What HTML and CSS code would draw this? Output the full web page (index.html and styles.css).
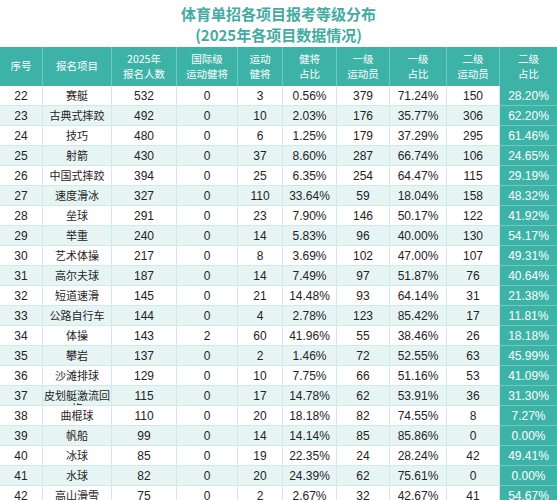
FILE: index.html
```html
<!DOCTYPE html>
<html lang="zh-CN">
<head>
    <meta charset="UTF-8">
    <meta name="viewport" content="width=device-width, initial-scale=1.0">
    <title>体育单招各项目报考等级分布</title>
    <link rel="stylesheet" href="styles.css">
</head>
<body>
    <div class="page">
        <div class="title-block">
            <h1 class="title">体育单招各项目报考等级分布</h1>
            <h2 class="subtitle">(2025年各项目数据情况)</h2>
        </div>
        <table class="data-table">
            <colgroup>
                <col class="col-no">
                <col class="col-name">
                <col class="col-total">
                <col class="col-intl">
                <col class="col-master">
                <col class="col-master-pct">
                <col class="col-first">
                <col class="col-first-pct">
                <col class="col-second">
                <col class="col-second-pct">
            </colgroup>
            <thead>
                <tr>
                    <th>序号</th>
                    <th>报名项目</th>
                    <th>2025年<br>报名人数</th>
                    <th>国际级<br>运动健将</th>
                    <th>运动<br>健将</th>
                    <th>健将<br>占比</th>
                    <th>一级<br>运动员</th>
                    <th>一级<br>占比</th>
                    <th>二级<br>运动员</th>
                    <th class="highlight">二级<br>占比</th>
                </tr>
            </thead>
            <tbody>
                <tr><td>22</td><td><div class="cell">赛艇</div></td><td>532</td><td>0</td><td>3</td><td>0.56%</td><td>379</td><td>71.24%</td><td>150</td><td class="highlight">28.20%</td></tr>
                <tr><td>23</td><td><div class="cell">古典式摔跤</div></td><td>492</td><td>0</td><td>10</td><td>2.03%</td><td>176</td><td>35.77%</td><td>306</td><td class="highlight">62.20%</td></tr>
                <tr><td>24</td><td><div class="cell">技巧</div></td><td>480</td><td>0</td><td>6</td><td>1.25%</td><td>179</td><td>37.29%</td><td>295</td><td class="highlight">61.46%</td></tr>
                <tr><td>25</td><td><div class="cell">射箭</div></td><td>430</td><td>0</td><td>37</td><td>8.60%</td><td>287</td><td>66.74%</td><td>106</td><td class="highlight">24.65%</td></tr>
                <tr><td>26</td><td><div class="cell">中国式摔跤</div></td><td>394</td><td>0</td><td>25</td><td>6.35%</td><td>254</td><td>64.47%</td><td>115</td><td class="highlight">29.19%</td></tr>
                <tr><td>27</td><td><div class="cell">速度滑冰</div></td><td>327</td><td>0</td><td>110</td><td>33.64%</td><td>59</td><td>18.04%</td><td>158</td><td class="highlight">48.32%</td></tr>
                <tr><td>28</td><td><div class="cell">垒球</div></td><td>291</td><td>0</td><td>23</td><td>7.90%</td><td>146</td><td>50.17%</td><td>122</td><td class="highlight">41.92%</td></tr>
                <tr><td>29</td><td><div class="cell">举重</div></td><td>240</td><td>0</td><td>14</td><td>5.83%</td><td>96</td><td>40.00%</td><td>130</td><td class="highlight">54.17%</td></tr>
                <tr><td>30</td><td><div class="cell">艺术体操</div></td><td>217</td><td>0</td><td>8</td><td>3.69%</td><td>102</td><td>47.00%</td><td>107</td><td class="highlight">49.31%</td></tr>
                <tr><td>31</td><td><div class="cell">高尔夫球</div></td><td>187</td><td>0</td><td>14</td><td>7.49%</td><td>97</td><td>51.87%</td><td>76</td><td class="highlight">40.64%</td></tr>
                <tr><td>32</td><td><div class="cell">短道速滑</div></td><td>145</td><td>0</td><td>21</td><td>14.48%</td><td>93</td><td>64.14%</td><td>31</td><td class="highlight">21.38%</td></tr>
                <tr><td>33</td><td><div class="cell">公路自行车</div></td><td>144</td><td>0</td><td>4</td><td>2.78%</td><td>123</td><td>85.42%</td><td>17</td><td class="highlight">11.81%</td></tr>
                <tr><td>34</td><td><div class="cell">体操</div></td><td>143</td><td>2</td><td>60</td><td>41.96%</td><td>55</td><td>38.46%</td><td>26</td><td class="highlight">18.18%</td></tr>
                <tr><td>35</td><td><div class="cell">攀岩</div></td><td>137</td><td>0</td><td>2</td><td>1.46%</td><td>72</td><td>52.55%</td><td>63</td><td class="highlight">45.99%</td></tr>
                <tr><td>36</td><td><div class="cell">沙滩排球</div></td><td>129</td><td>0</td><td>10</td><td>7.75%</td><td>66</td><td>51.16%</td><td>53</td><td class="highlight">41.09%</td></tr>
                <tr><td>37</td><td><div class="cell">皮划艇激流回旋</div></td><td>115</td><td>0</td><td>17</td><td>14.78%</td><td>62</td><td>53.91%</td><td>36</td><td class="highlight">31.30%</td></tr>
                <tr><td>38</td><td><div class="cell">曲棍球</div></td><td>110</td><td>0</td><td>20</td><td>18.18%</td><td>82</td><td>74.55%</td><td>8</td><td class="highlight">7.27%</td></tr>
                <tr><td>39</td><td><div class="cell">帆船</div></td><td>99</td><td>0</td><td>14</td><td>14.14%</td><td>85</td><td>85.86%</td><td>0</td><td class="highlight">0.00%</td></tr>
                <tr><td>40</td><td><div class="cell">冰球</div></td><td>85</td><td>0</td><td>19</td><td>22.35%</td><td>24</td><td>28.24%</td><td>42</td><td class="highlight">49.41%</td></tr>
                <tr><td>41</td><td><div class="cell">水球</div></td><td>82</td><td>0</td><td>20</td><td>24.39%</td><td>62</td><td>75.61%</td><td>0</td><td class="highlight">0.00%</td></tr>
                <tr><td>42</td><td><div class="cell">高山滑雪</div></td><td>75</td><td>0</td><td>2</td><td>2.67%</td><td>32</td><td>42.67%</td><td>41</td><td class="highlight">54.67%</td></tr>
            </tbody>
        </table>
    </div>
</body>
</html>
```

FILE: styles.css
```css
:root {
    --teal: #3db3a8;
    --teal-title: #43aba1;
    --teal-line: #6ecac1;
    --row-alt: #e6f5f4;
    --grid-line: #cfeae7;
    --text-color: #1f2324;
}

* {
    margin: 0;
    padding: 0;
    box-sizing: border-box;
}

body {
    background: #ffffff;
    font-family: "Liberation Sans", "Noto Sans CJK SC", sans-serif;
    color: var(--text-color);
    overflow: hidden;
}

.page {
    width: 557px;
}

.title-block {
    height: 47px;
    padding-top: 3px;
    text-align: center;
    color: var(--teal-title);
}

.title,
.subtitle {
    font-family: "Noto Sans CJK SC", sans-serif;
    font-size: 15px;
    font-weight: 700;
    line-height: 21px;
}

.data-table {
    width: 557px;
    table-layout: fixed;
    border-collapse: separate;
    border-spacing: 0;
}

.col-no { width: 43px; }
.col-name { width: 69px; }
.col-total { width: 65px; }
.col-intl { width: 61px; }
.col-master { width: 45px; }
.col-master-pct { width: 54px; }
.col-first { width: 53px; }
.col-first-pct { width: 57px; }
.col-second { width: 53px; }
.col-second-pct { width: 57px; }

.data-table th {
    height: 39px;
    background: var(--teal);
    color: #ffffff;
    font-family: "Noto Sans CJK SC", sans-serif;
    font-size: 10.5px;
    font-weight: 400;
    line-height: 14.5px;
    border-right: 1px solid var(--teal-line);
    vertical-align: middle;
}

.data-table th:last-child {
    border-right: none;
}

.data-table tbody tr {
    height: 19.9px;
}

.data-table tbody tr:nth-child(even) td {
    background: var(--row-alt);
}

.data-table td {
    padding: 0;
    padding-top: 1px;
    text-align: center;
    vertical-align: middle;
    font-size: 12px;
    line-height: 14px;
    border-right: 1px solid var(--grid-line);
    border-bottom: 1px solid var(--grid-line);
    white-space: nowrap;
}

.data-table td .cell {
    height: 18px;
    padding-top: 2px;
    overflow: hidden;
    white-space: normal;
    font-family: "Noto Sans CJK SC", sans-serif;
    font-size: 11px;
    line-height: 13px;
}

.data-table tbody tr td.highlight {
    background: var(--teal);
    color: #ffffff;
    border-right: none;
    border-bottom: 1px solid var(--teal-line);
}
```
